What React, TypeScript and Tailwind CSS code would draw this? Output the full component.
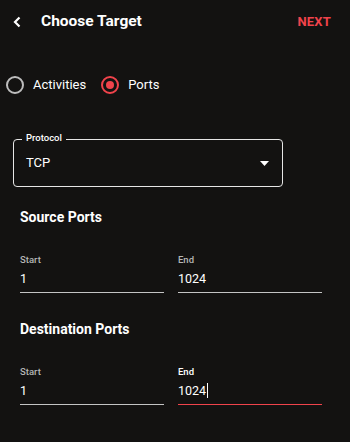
import { useState } from 'react';

function PortField({ label, value, focused }: { label: string; value: string; focused?: boolean }) {
    return (
        <div className="flex flex-col">
            <span className={`text-[9.5px] leading-[12px] font-medium ${focused ? 'text-white' : 'text-[#b5b5b5]'}`}>{label}</span>
            <div className={`mt-[5px] h-[22px] flex items-start border-b ${focused ? 'border-[#f0434b]' : 'border-[#c4c4c4]'}`}>
                <span className="text-[12.5px] leading-[16px] text-white">{value}</span>
                {focused && <span className="w-px h-[15px] bg-white ml-px" />}
            </div>
        </div>
    );
}

function PortSection({ title, focusEnd }: { title: string; focusEnd?: boolean }) {
    return (
        <div className="px-5">
            <h2 className="text-[14px] leading-[20px] font-bold">{title}</h2>
            <div className="mt-[27px] grid grid-cols-2 gap-[14px] w-[302px]">
                <PortField label="Start" value="1" />
                <PortField label="End" value="1024" focused={focusEnd} />
            </div>
        </div>
    );
}

export default function App() {
    const [target, setTarget] = useState<'activities' | 'ports'>('ports');

    return (
        <div className="w-[350px] h-[442px] bg-[#131211] text-white font-['Roboto',sans-serif] overflow-hidden">
            <header className="h-[42px] flex items-center pt-[2px] pl-[13px] pr-[19px]">
                <svg width="8" height="12" viewBox="0 0 8 12">
                    <path d="M6.5 1.5 L2 6 L6.5 10.5" fill="none" stroke="white" strokeWidth="2.2" />
                </svg>
                <h1 className="ml-[20px] text-[15.5px] font-bold">Choose Target</h1>
                <button className="ml-auto text-[13px] font-bold text-[#f0434b] tracking-[0.2px]">NEXT</button>
            </header>

            <div className="mt-[31px] h-[24px] flex items-center pl-[6px] text-[13px]">
                <button onClick={() => setTarget('activities')} className="flex items-center">
                    <span className={`w-[18px] h-[18px] rounded-full border-2 flex items-center justify-center ${target === 'activities' ? 'border-[#f0434b]' : 'border-[#bdbdbd]'}`}>
                        {target === 'activities' && <span className="w-[8px] h-[8px] rounded-full bg-[#f0434b]" />}
                    </span>
                    <span className="ml-[9px]">Activities</span>
                </button>
                <button onClick={() => setTarget('ports')} className="flex items-center ml-[15px]">
                    <span className={`w-[18px] h-[18px] rounded-full border-2 flex items-center justify-center ${target === 'ports' ? 'border-[#f0434b]' : 'border-[#bdbdbd]'}`}>
                        {target === 'ports' && <span className="w-[8px] h-[8px] rounded-full bg-[#f0434b]" />}
                    </span>
                    <span className="ml-[9px]">Ports</span>
                </button>
            </div>

            <div className="mt-[42px] ml-[13px] w-[270px] h-[48px] relative border border-[#e6e6e6] rounded-[4px] flex items-center pl-[12px] pr-[13px]">
                <span className="absolute -top-[8px] left-[8px] px-[4px] bg-[#131211] text-[9.5px] leading-[12px] font-medium">Protocol</span>
                <span className="text-[13px]">TCP</span>
                <svg width="9" height="5" viewBox="0 0 9 5" className="ml-auto">
                    <path d="M0 0 L9 0 L4.5 5 Z" fill="white" />
                </svg>
            </div>

            <div className="mt-[20px]">
                <PortSection title="Source Ports" />
            </div>
            <div className="mt-[26px]">
                <PortSection title="Destination Ports" focusEnd />
            </div>
        </div>
    );
}
